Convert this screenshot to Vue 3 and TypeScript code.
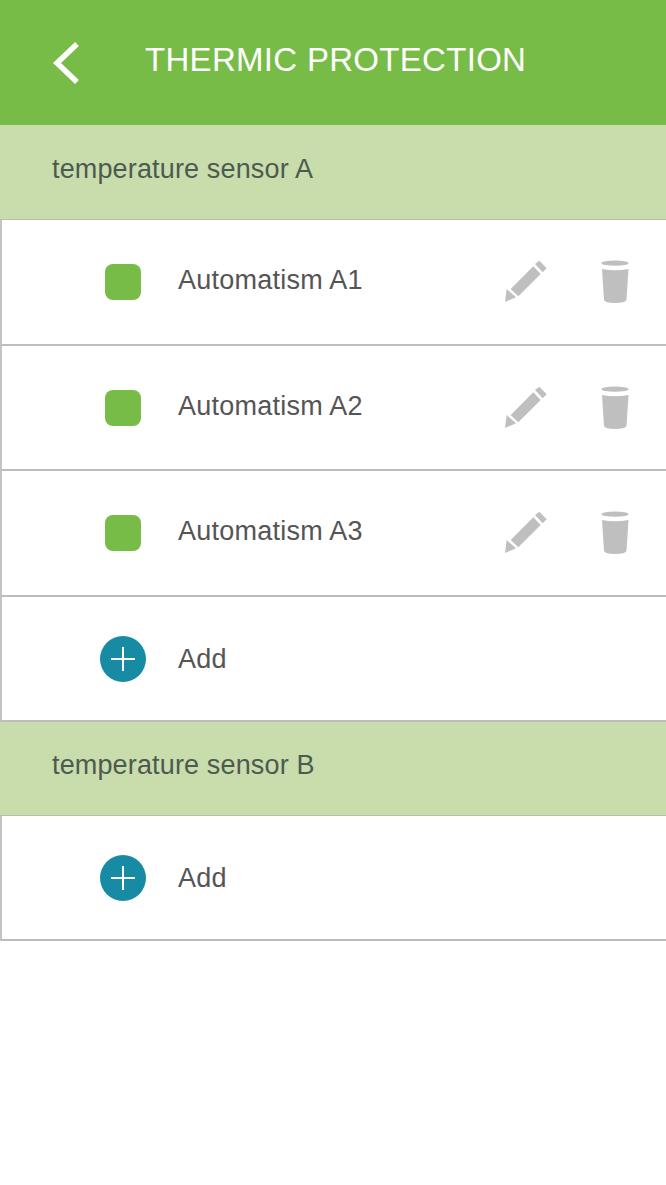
<script setup lang="ts">
interface Row { label: string; kind: 'item' | 'add'; h: number }
interface Section { title: string; h: number; rows: Row[] }
const sections: Section[] = [
  { title: 'temperature sensor A', h: 95, rows: [
    { label: 'Automatism A1', kind: 'item', h: 126 },
    { label: 'Automatism A2', kind: 'item', h: 125 },
    { label: 'Automatism A3', kind: 'item', h: 126 },
    { label: 'Add', kind: 'add', h: 125 },
  ] },
  { title: 'temperature sensor B', h: 94, rows: [
    { label: 'Add', kind: 'add', h: 125 },
  ] },
]
</script>

<template>
  <div class="page">
    <header class="top">
      <svg class="back" width="28" height="44" viewBox="0 0 28 44">
        <path d="M25 3 L5 22 L25 41" fill="none" stroke="#fff" stroke-width="5.5" />
      </svg>
      <h1>THERMIC PROTECTION</h1>
    </header>
    <section v-for="s in sections" :key="s.title">
      <div class="head" :style="{ height: s.h + 'px' }">{{ s.title }}</div>
      <div v-for="r in s.rows" :key="r.label" class="row" :style="{ height: r.h + 'px' }">
        <div class="lead">
          <span v-if="r.kind === 'item'" class="square"></span>
          <svg v-else width="46" height="46" viewBox="0 0 46 46">
            <circle cx="23" cy="23" r="23" fill="#168ba3" />
            <path d="M11 23 H35 M23 11 V35" stroke="#fff" stroke-width="2" />
          </svg>
        </div>
        <span class="label" :class="r.kind">{{ r.label }}</span>
        <div v-if="r.kind === 'item'" class="actions">
          <svg width="44" height="44" viewBox="0 0 44 44">
            <path fill="#bfbfbf" d="M1 42 L2.7 29 L12 37.3 Z M6.7 29 L29.3 6.3 L36.7 14 L14.3 36.3 Z M31 4 L35.3 .7 L42.7 8.3 L38.7 12.3 Z" />
          </svg>
          <svg width="30" height="44" viewBox="0 0 30 44">
            <ellipse cx="15" cy="3.2" rx="13.5" ry="2.6" fill="#bfbfbf" />
            <path fill="#bfbfbf" d="M2 9 Q15 11.5 28.5 9 L26.5 40 Q25.5 43 15 43 Q5 43 4 40 Z" />
          </svg>
        </div>
      </div>
    </section>
  </div>
</template>

<style scoped>
.page { width: 666px; height: 1185px; background: #fff; font-family: "Liberation Sans", Arial, sans-serif; overflow: hidden; }
.top { height: 125px; background: #76bc47; display: flex; align-items: center; padding-left: 52px; box-sizing: border-box; }
.back { margin-right: 65px; }
h1 { margin: 0 0 5px; font-size: 33px; font-weight: 400; color: #fff; letter-spacing: .3px; }
.head { background: #c9ddac; color: #4d5a50; font-size: 27px; letter-spacing: .15px; display: flex; align-items: center; padding: 0 0 5px 52px; box-sizing: border-box; border-bottom: 1px solid #b5c0a8; }
section + section .head { padding-bottom: 7px; }
.row { display: flex; align-items: center; box-sizing: border-box; border-left: 2px solid #c4c4c4; border-bottom: 2px solid #bdbdbd; color: #555; font-size: 27px; }
.lead { width: 46px; margin-left: 98px; margin-right: 32px; display: flex; justify-content: center; }
.square { width: 36px; height: 36px; border-radius: 8px; background: #76bc47; }
.label { flex: 1; letter-spacing: .25px; }
.label.item { padding-bottom: 3px; }
.label.add { padding-top: 2px; }
.actions { display: flex; align-items: center; gap: 52px; margin-right: 36px; }
</style>
